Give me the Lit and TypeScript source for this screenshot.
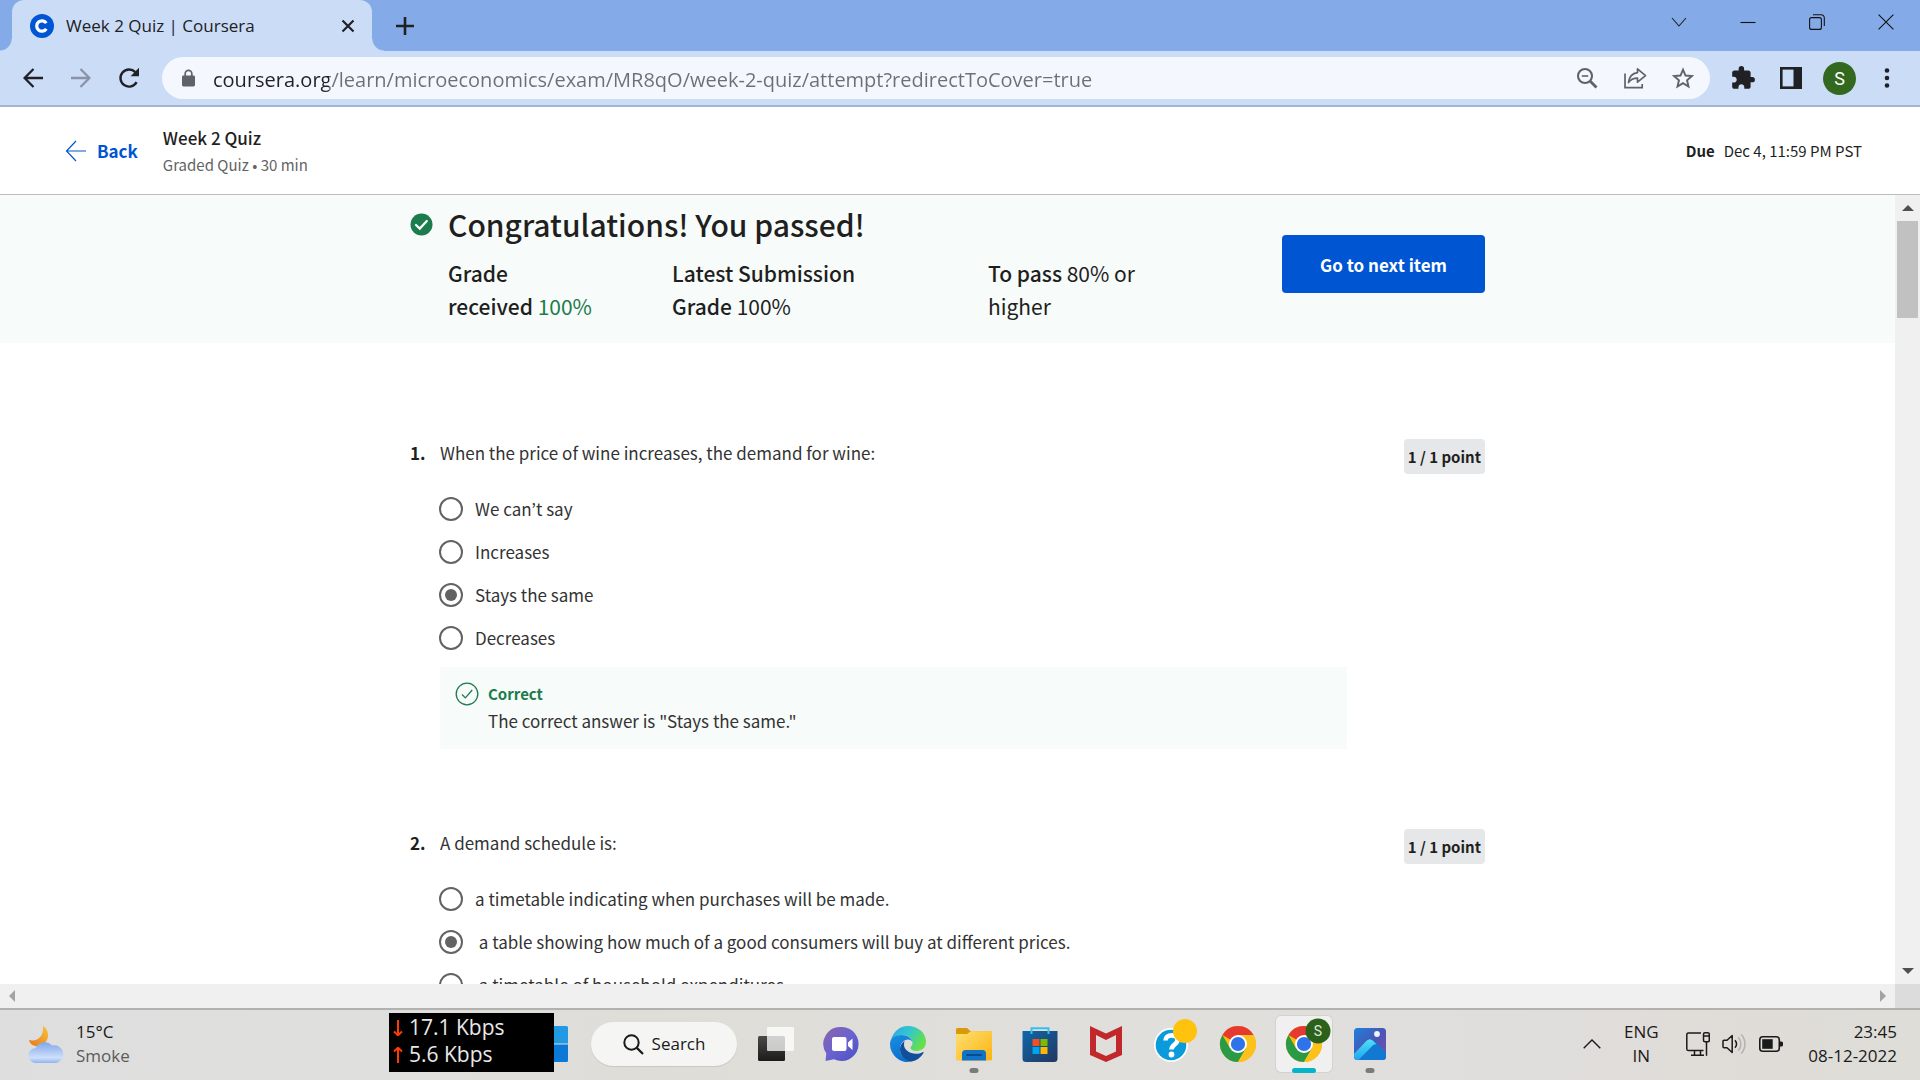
import { LitElement, html, svg, css } from "lit";
import { customElement, property, state } from "lit/decorators.js";
import { classMap } from "lit/directives/class-map.js";

const base = css`
  *, *::before, *::after { box-sizing: border-box; }
  button { font: inherit; color: inherit; border: 0; padding: 0; margin: 0; background: none; cursor: pointer; display: flex; align-items: center; justify-content: center; }
  svg { display: block; flex: none; }
  h1, h2, p { margin: 0; font-weight: inherit; font-size: inherit; }
`;

interface Question {
  number: number;
  prompt: string;
  options: string[];
  selected: number;
  explanation: string;
}

const QUESTIONS: Question[] = [
  {
    number: 1,
    prompt: "When the price of wine increases, the demand for wine:",
    options: ["We can’t say", "Increases", "Stays the same", "Decreases"],
    selected: 2,
    explanation: 'The correct answer is "Stays the same."',
  },
  {
    number: 2,
    prompt: "A demand schedule is:",
    options: [
      "a timetable indicating when purchases will be made.",
      "\u00a0a table showing how much of a good consumers will buy at different prices.",
      "\u00a0a timetable of household expenditures.",
    ],
    selected: 1,
    explanation: "",
  },
];

@customElement("browser-bar")
export class BrowserBar extends LitElement {
  static styles = [base, css`
    :host { display: block; flex: none; font-family: "Open Sans", "Noto Sans", sans-serif; color: #202124; }
    .strip { display: flex; height: 51px; background: #84abe8; }
    .tab { display: flex; align-items: center; width: 360px; margin-left: 12px; padding: 0 15px 0 18px; gap: 12px; background: #cbdcf7; border-radius: 12px 12px 0 0; position: relative; }
    .tab::before, .tab::after { content: ""; position: absolute; bottom: 0; width: 12px; height: 12px; }
    .tab::before { left: -12px; background: radial-gradient(circle at 0 0, transparent 11px, #cbdcf7 12px); }
    .tab::after { right: -12px; background: radial-gradient(circle at 100% 0, transparent 11px, #cbdcf7 12px); }
    .title { flex: 1; font-size: 17px; line-height: 24px; white-space: nowrap; }
    .new { width: 42px; margin-left: 12px; }
    .window { display: flex; margin-left: auto; padding-bottom: 8px; }
    .window button { width: 69px; }
    .bar { display: flex; align-items: center; height: 54px; padding: 0 16px 0 9px; background: #cbdcf7; }
    .nav { width: 48px; height: 42px; }
    .omnibox { flex: 1; display: flex; align-items: center; height: 42px; margin: 0 9px; padding: 0 3px 0 19px; border-radius: 21px; background: #f4f8fe; }
    .url { flex: 1; min-width: 0; border: 0; outline: 0; padding: 2px 0 0; margin-left: 17px; height: 32px; font: 20px/30px "Open Sans", "Noto Sans", sans-serif; color: transparent; background: linear-gradient(90deg, #202124 116px, #6b7077 116px); -webkit-background-clip: text; background-clip: text; }
    .tool { width: 48px; height: 42px; }
    .avatar { width: 33px; height: 33px; border-radius: 50%; background: #32691e; color: #fff; font: 18px/33px Roboto, sans-serif; margin: 0 8px; }
    .menu { width: 32px; height: 42px; margin: 0 1px 0 7px; }
    .edge { height: 2px; background: #a3b4d0; }
  `];

  render() {
    return html`
      <div class="strip">
        <div class="tab">
          <svg width="24" height="24" viewBox="0 0 24 24"><circle cx="12" cy="12" r="12" fill="#0056d2"/><path d="M16.3 9.2A5.2 5.2 0 1 0 16.3 14.8" fill="none" stroke="#fff" stroke-width="3.2"/></svg>
          <span class="title">Week 2 Quiz | Coursera</span>
          <button aria-label="Close tab"><svg width="18" height="18" viewBox="0 0 18 18"><path d="M3.500 3.500l11 11M14.500 3.500l-11 11" stroke="#202124" stroke-width="2.2"/></svg></button>
        </div>
        <button class="new" aria-label="New tab"><svg width="18" height="18" viewBox="0 0 18 18"><path d="M9 0v18M0 9h18" stroke="#202124" stroke-width="2.6"/></svg></button>
        <div class="window">
          <button aria-label="Search tabs"><svg width="16" height="16" viewBox="0 0 16 16"><path d="M1 4l7 8 7-8" fill="none" stroke="#202124" stroke-width="1.1"/></svg></button>
          <button aria-label="Minimize"><svg width="16" height="16" viewBox="0 0 16 16"><path d="M.5 8.5h15" stroke="#111" stroke-width="1.1"/></svg></button>
          <button aria-label="Restore"><svg width="16" height="16" viewBox="0 0 16 16" fill="none" stroke="#111" stroke-width="1.1"><rect x=".6" y="3.6" width="11.8" height="11.8" rx="2"/><path d="M4 .7h8.2a3.1 3.1 0 0 1 3.1 3.1V12"/></svg></button>
          <button aria-label="Close window"><svg width="16" height="16" viewBox="0 0 16 16"><path d="M.6.6l14.8 14.8M15.4.6L.6 15.4" stroke="#111" stroke-width="1.1"/></svg></button>
        </div>
      </div>
      <div class="bar">
        <button class="nav" aria-label="Back"><svg width="20" height="20" viewBox="0 0 20 20"><path d="M10.5 1L1.6 10l8.9 9M1.6 10H20" fill="none" stroke="#202124" stroke-width="2.3"/></svg></button>
        <button class="nav" aria-label="Forward"><svg width="20" height="20" viewBox="0 0 20 20"><path d="M9.5 1l8.9 9-8.9 9M18.4 10H0" fill="none" stroke="#8a93a5" stroke-width="2.3"/></svg></button>
        <button class="nav" aria-label="Reload"><svg width="22" height="22" viewBox="0 0 22 22"><path d="M18.6 15.2A8.6 8.6 0 1 1 17.3 5.1" fill="none" stroke="#202124" stroke-width="2.4"/><path d="M21 .8v8.4h-8.4z" fill="#202124"/></svg></button>
        <div class="omnibox">
          <svg width="15" height="18" viewBox="0 0 15 18"><rect x="1" y="6.5" width="13" height="11" rx="1.4" fill="#5f6368"/><path d="M4.2 7V4.6a3.3 3.3 0 0 1 6.6 0V7" fill="none" stroke="#5f6368" stroke-width="1.7"/></svg>
          <input class="url" type="text" aria-label="Address" .value=${"coursera.org/learn/microeconomics/exam/MR8qO/week-2-quiz/attempt?redirectToCover=true"} />
          <button class="tool" aria-label="Zoom"><svg width="22" height="22" viewBox="0 0 22 22" fill="none" stroke="#5f6368"><circle cx="9" cy="9" r="7" stroke-width="2.1"/><path d="M14 14l6.5 6.5" stroke-width="2.8"/><path d="M5.8 9h6.4" stroke-width="1.6"/></svg></button>
          <button class="tool" aria-label="Share"><svg width="24" height="22" viewBox="0 0 24 22" fill="none" stroke="#5f6368" stroke-width="1.7"><path d="M2 6.5v14.2h17.2V17"/><path d="M14.5 1.8L22.5 8.6l-8 6.6v-4c-4.2 0-7 1.4-9 4.4.6-5.2 3.4-9.2 9-9.9z" stroke-linejoin="round"/></svg></button>
          <button class="tool" aria-label="Bookmark"><svg width="22" height="22" viewBox="0 0 22 22"><path d="M11 2.6l2.5 5.9 6.4.55-4.85 4.2 1.45 6.25L11 16.2 5.5 19.500l1.45-6.25L2.1 9.05l6.4-.55z" fill="none" stroke="#5f6368" stroke-width="1.9"/></svg></button>
        </div>
        <button class="tool" aria-label="Extensions"><svg width="26" height="26" viewBox="0 0 24 24"><path fill="#202124" d="M20.500 11H19V7c0-1.100-.9-2-2-2h-4V3.500a2.500 2.500 0 0 0-5 0V5H4c-1.100 0-1.990.9-1.990 2v3.800H3.500c1.490 0 2.700 1.210 2.700 2.700s-1.210 2.700-2.700 2.700H2V20c0 1.100.9 2 2 2h3.800v-1.500c0-1.490 1.210-2.700 2.700-2.700s2.700 1.210 2.700 2.700V22H17c1.100 0 2-.9 2-2v-4h1.500a2.500 2.500 0 0 0 0-5z"/></svg></button>
        <button class="tool" aria-label="Side panel"><svg width="22" height="22" viewBox="0 0 22 22"><rect x="1.3" y="1.3" width="19.4" height="19.4" fill="none" stroke="#202124" stroke-width="2.6"/><path d="M13.5 1H21v20h-7.5z" fill="#202124"/></svg></button>
        <button class="avatar" aria-label="Profile">S</button>
        <button class="menu" aria-label="Menu"><svg width="6" height="22" viewBox="0 0 6 22" fill="#202124"><circle cx="3" cy="3.5" r="2.3"/><circle cx="3" cy="11" r="2.3"/><circle cx="3" cy="18.5" r="2.3"/></svg></button>
      </div>
      <div class="edge"></div>
    `;
  }
}

@customElement("quiz-header")
export class QuizHeader extends LitElement {
  static styles = [base, css`
    :host { display: flex; align-items: center; flex: none; height: 88px; padding: 0 58px 0 65px; background: #fff; border-bottom: 1px solid #bdbdbd; color: #1f1f1f; font-family: "Noto Sans CJK KR", sans-serif; }
    .back { display: flex; align-items: center; gap: 10px; color: #0056d2; font-size: 17px; line-height: 24px; font-weight: 700; text-decoration: none; }
    .names { margin-left: 25px; }
    .name { font-size: 17px; line-height: 27px; font-weight: 500; }
    .kind { font-size: 15px; line-height: 27px; color: #636363; }
    .due { display: flex; gap: 9px; margin-left: auto; font-size: 15px; line-height: 24px; }
    .due strong { font-weight: 700; }
  `];

  render() {
    return html`
      <a class="back" href="#"><svg width="22" height="22" viewBox="0 0 22 22"><path d="M11 1L1.5 11 11 21M1.5 11H21" fill="none" stroke="#0056d2" stroke-width="1.2"/></svg>Back</a>
      <div class="names">
        <h1 class="name">Week 2 Quiz</h1>
        <p class="kind">Graded Quiz • 30 min</p>
      </div>
      <div class="due"><strong>Due</strong><span>Dec 4, 11:59 PM PST</span></div>
    `;
  }
}

@customElement("grade-banner")
export class GradeBanner extends LitElement {
  static styles = [base, css`
    :host { display: block; background: #f7fbf9; color: #1f1f1f; font-family: "Noto Sans CJK KR", sans-serif; }
    .inner { display: flex; align-items: flex-start; justify-content: space-between; max-width: 1075px; margin: 0 auto; padding: 7px 0 20px; }
    .head { display: flex; align-items: center; gap: 15px; }
    .title { font-size: 30px; line-height: 44px; font-weight: 500; }
    .grades { display: grid; grid-template-columns: 148px 240px 160px; column-gap: 76px; margin: 11px 0 0 38px; font-size: 21px; line-height: 33px; }
    .grades b { font-weight: 500; }
    .pass { color: #1d7c4d; }
    .next { min-width: 203px; height: 58px; margin-top: 33px; border-radius: 4px; background: #0056d2; color: #fff; font-size: 17px; font-weight: 700; }
  `];

  render() {
    return html`
      <div class="inner">
        <div>
          <div class="head">
            <svg width="23" height="23" viewBox="0 0 23 23"><circle cx="11.5" cy="11.5" r="11" fill="#1d7c4d"/><path d="M6 12l3.8 3.6L16.8 8" fill="none" stroke="#fff" stroke-width="2.2" stroke-linecap="round"/></svg>
            <h2 class="title">Congratulations! You passed!</h2>
          </div>
          <div class="grades">
            <p><b>Grade received</b> <span class="pass">100%</span></p>
            <p><b>Latest Submission Grade</b> 100%</p>
            <p><b>To pass</b> 80% or higher</p>
          </div>
        </div>
        <button class="next">Go to next item</button>
      </div>
    `;
  }
}

@customElement("quiz-question")
export class QuizQuestion extends LitElement {
  @property({ attribute: false }) question!: Question;
  @state() private picked = -1;

  static styles = [base, css`
    :host { display: block; color: #333; font-family: "Noto Sans CJK KR", sans-serif; font-size: 17px; line-height: 27px; }
    .top { display: flex; align-items: flex-start; }
    .number { width: 30px; font-weight: 700; color: #1f1f1f; }
    .prompt { flex: 1; }
    .points { padding: 0 4px; border-radius: 4px; background: #e5e7e8; color: #1f1f1f; font-size: 15px; line-height: 35px; font-weight: 700; }
    .options { margin: 13px 0 0 29px; }
    .option { display: flex; align-items: center; gap: 12px; height: 43px; cursor: pointer; }
    .radio { appearance: none; display: grid; place-items: center; width: 24px; height: 24px; margin: 0; border: 2px solid #636363; border-radius: 50%; }
    .radio:checked::before { content: ""; width: 12px; height: 12px; border-radius: 50%; background: #636363; }
    .feedback { display: flex; gap: 9px; margin: 8px 138px 0 30px; padding: 13px 15px; background: #f7fbf9; }
    .feedback-text { padding-bottom: 2px; }
    .verdict { font-size: 15px; color: #1d7c4d; font-weight: 700; }
    .mark { margin-top: 2px; }
  `];

  willUpdate() {
    if (this.picked < 0) this.picked = this.question.selected;
  }

  render() {
    const q = this.question;
    return html`
      <div class="top">
        <span class="number">${q.number}.</span>
        <p class="prompt" id="prompt">${q.prompt}</p>
        <span class="points">1 / 1 point</span>
      </div>
      <div class="options" role="radiogroup" aria-labelledby="prompt">
        ${q.options.map((text, i) => html`
          <label class="option">
            <input class="radio" type="radio" name="answer" .checked=${this.picked === i} @change=${() => (this.picked = i)} />
            <span>${text}</span>
          </label>`)}
      </div>
      ${q.explanation ? html`
        <div class="feedback">
          <svg class="mark" width="24" height="24" viewBox="0 0 24 24" fill="none" stroke="#1d7c4d" stroke-width="1.3"><circle cx="12" cy="12" r="10.8"/><path d="M7 12.5l3.4 3.4L17.2 8"/></svg>
          <div class="feedback-text"><p class="verdict">Correct</p><p>${q.explanation}</p></div>
        </div>` : ""}
    `;
  }
}

const chrome = svg`
  <circle cx="18" cy="18" r="18" fill="#fbbc04"/>
  <path d="M18 18L2.410 9A18 18 0 0 1 33.590 9H18z" fill="#e63a30"/>
  <path d="M2.410 9A18 18 0 0 0 18 36L25.800 22.500 18 18 10.200 22.500z" fill="#2b9a47"/>
  <path d="M18 36A18 18 0 0 0 33.590 9H18L25.800 22.500z" fill="#fcc21b"/>
  <circle cx="18" cy="18" r="9" fill="#fff"/><circle cx="18" cy="18" r="7.1" fill="#2f73ea"/>`;

const ICONS = {
  taskview: svg`<defs><linearGradient id="tv" x1="0" y1="0" x2="0" y2="1"><stop stop-color="#4a4a48"/><stop offset="1" stop-color="#1b1b1b"/></linearGradient></defs><rect x="0" y="10" width="27" height="25" rx="1.5" fill="url(#tv)"/><rect x="9" y="1" width="27" height="24" rx="1" fill="#fff" fill-opacity=".75"/>`,
  chat: svg`<defs><linearGradient id="ch" x1="0" y1="0" x2="1" y2="1"><stop stop-color="#8b63a8"/><stop offset=".5" stop-color="#6a63d0"/><stop offset="1" stop-color="#4a4fc4"/></linearGradient></defs><path d="M18 1a17 17 0 1 1-8 32.200L1.500 35l.8-7.500A17 17 0 0 1 18 1z" fill="url(#ch)"/><rect x="8" y="11" width="14.5" height="14" rx="2" fill="#fff"/><path d="M24 16.500l4.500-4v11.500L24 20z" fill="#fff"/>`,
  edge: svg`<defs><linearGradient id="e1" x1="0" y1="0" x2="1" y2=".5"><stop stop-color="#2aa7e6"/><stop offset=".5" stop-color="#32c6cf"/><stop offset="1" stop-color="#66e04a"/></linearGradient><linearGradient id="e2" x1="0" y1="0" x2=".4" y2="1"><stop stop-color="#1a8fe0"/><stop offset="1" stop-color="#0a6fcf"/></linearGradient></defs>
    <path d="M1 14C3 6 9.500 0 18 0c10 0 18 7 18 15.500 0 6-4 9.500-9.500 9.500-4 0-6-1.500-6-3 0-1.500 2-2 2-5C22.500 12 18 9 12 9 7 9 3 11 1 14z" fill="url(#e1)"/>
    <path d="M0 18C0 12 5 9 11 9c6.500 0 11.500 3.500 11.500 8 0-2-2-3.500-4.500-3.500-4 0-8 4-8 9.500 0 7 5 11.500 10 12.900A18 18 0 0 1 0 18z" fill="url(#e2)"/>
    <path d="M14.500 15c-3 2-4.500 5-4.500 8 0 7 5 12 10.500 12.800A18 18 0 0 0 33.500 27c.4-.9-.3-1.200-1-.8-2 1-4 1.500-6.500 1.500-6.500 0-12-4-12-9.200 0-1.300.2-2.500.5-3.500z" fill="#104f9c"/>`,
  folder: svg`<defs><linearGradient id="fo" x1="0" y1="0" x2="1" y2="1"><stop stop-color="#ffdf72"/><stop offset="1" stop-color="#fbb40e"/></linearGradient></defs><path d="M0 3.500A1.500 1.500 0 0 1 1.500 2H11l4 3.500h19.500A1.500 1.500 0 0 1 36 7v8H0z" fill="#d99a0a"/><path d="M0 8h11l4-2.700h21V33a1.500 1.500 0 0 1-1.500 1.500h-33A1.500 1.500 0 0 1 0 33z" fill="url(#fo)"/><path d="M6 34.500V27.500a3.500 3.500 0 0 1 3.500-3.500h17a3.500 3.500 0 0 1 3.500 3.500v7z" fill="#1173c6"/><path d="M11 29h14" stroke="#0a4b8b" stroke-width="2" stroke-linecap="round"/>`,
  store: svg`<defs><linearGradient id="st" x1="0" y1="0" x2="1" y2="1"><stop stop-color="#0d68ab"/><stop offset="1" stop-color="#243660"/></linearGradient></defs><path d="M9.500 7V2.200h17V7" fill="none" stroke="#35c0ee" stroke-width="2"/><path d="M.500 5h35v27.500A3.500 3.500 0 0 1 32 36H4a3.500 3.500 0 0 1-3.500-3.500z" fill="url(#st)"/><path d="M9.500 5v3M26.500 5v3" stroke="#35c0ee" stroke-width="2"/><path d="M10.500 13h7v7h-7z" fill="#f25022"/><path d="M18.500 13h7v7h-7z" fill="#7fba00"/><path d="M10.500 21h7v7h-7z" fill="#00a4ef"/><path d="M18.500 21h7v7h-7z" fill="#ffb900"/>`,
  shield: svg`<path d="M2 0l16 7.500L34 0v29L18 36 2 29z" fill="#c0282c"/><path d="M8 9l10 5 10-5v16.500L18 30 8 25.500z" fill="#e0deda"/>`,
  help: svg`<circle cx="17" cy="19" r="17" fill="#fff"/><circle cx="17" cy="19" r="15.3" fill="#0a9bdc"/><path d="M11.500 14.500c0-7 12-6.500 12-.5 0 4.500-6 4.500-6 9.500" fill="none" stroke="#fff" stroke-width="4.6"/><circle cx="17.5" cy="28.5" r="2.9" fill="#fff"/><circle cx="31" cy="5" r="12" fill="#ffc20e"/>`,
  chrome,
  profile: svg`${chrome}<circle cx="32" cy="5" r="12.5" fill="#2c611b"/><text x="32" y="10" text-anchor="middle" font-family="Roboto, sans-serif" font-size="14" fill="#dfe8da">S</text>`,
  photos: svg`<defs><linearGradient id="ph" x1="0" y1="0" x2="1" y2="1"><stop stop-color="#1b83dc"/><stop offset=".5" stop-color="#4a55b5"/><stop offset="1" stop-color="#7a4db0"/></linearGradient><linearGradient id="pm" x1="0" y1="0" x2="0" y2="1"><stop stop-color="#4fe0f7"/><stop offset="1" stop-color="#1da5ee"/></linearGradient></defs><rect x="2" y="2" width="32" height="32" rx="3.5" fill="url(#ph)"/><path d="M6 34L20.500 13.500 34 26.500V30.500a3.500 3.500 0 0 1-3.500 3.500z" fill="#1279d3"/><path d="M2 28L14.500 14.800c2-2 4.500-2 6.500 0l3.500 3.400c-1.500-.2-2.800.3-4 1.500L6.500 34h-1A3.500 3.500 0 0 1 2 30.500z" fill="url(#pm)"/><circle cx="25" cy="8" r="2.9" fill="#eef3ff"/>`,
};

interface Tile { label: string; icon: keyof typeof ICONS; running?: boolean; active?: boolean; }

const TILES: Tile[] = [
  { label: "Task view", icon: "taskview" },
  { label: "Chat", icon: "chat" },
  { label: "Edge", icon: "edge" },
  { label: "File Explorer", icon: "folder", running: true },
  { label: "Store", icon: "store" },
  { label: "McAfee", icon: "shield" },
  { label: "Help", icon: "help" },
  { label: "Chrome", icon: "chrome" },
  { label: "Chrome, profile S", icon: "profile", active: true },
  { label: "Photos", icon: "photos", running: true },
];

@customElement("task-bar")
export class TaskBar extends LitElement {
  static styles = [base, css`
    :host { display: grid; grid-template-columns: 1fr auto 1fr; align-items: center; flex: none; height: 72px; border-top: 2px solid #b1b1b0; padding: 0 23px 2px; position: relative; background: linear-gradient(90deg, #dedede, #dfdfde 18%, #dfddd8 33%, #e1dfdb 62%, #dfdedd 78%, #e0dcd8 88%, #deddd8); color: #1a1a1a; font-family: "Open Sans", "Noto Sans", sans-serif; font-size: 17px; line-height: 24px; box-sizing: border-box; }
    .weather { display: flex; align-items: center; gap: 11px; justify-self: start; text-align: left; margin-left: 5px; }
    .sky { color: #5b5b5b; }
    .meter { position: absolute; left: 389px; top: 3px; width: 165px; height: 59px; background: #000; color: #e8e8e8; font-size: 21px; line-height: 27px; padding: 1px 4px; }
    .meter p { display: flex; align-items: center; gap: 6px; }
    .apps { display: flex; align-items: center; height: 68px; }
    .tile { position: relative; width: 56px; height: 56px; margin-right: 10px; border-radius: 5px; }
    .tile:last-child { margin-right: 0; }
    .tile svg { overflow: visible; }
    .active { background: #f0f0f0; box-shadow: 0 0 0 1px #d3d2cf; }
    .running::after, .active::after { content: ""; position: absolute; bottom: -1px; left: 50%; height: 5px; border-radius: 3px; translate: -50% 0; }
    .running::after { width: 9px; background: #7b7b7a; }
    .active::after { width: 24px; background: #06b4c9; }
    .search { display: flex; align-items: center; gap: 8px; width: 146px; height: 44px; margin: 0 11px 0 3px; border-radius: 22px; background: #f5f5f3; box-shadow: 0 1px 1px #c8c7c3; }
    .tray { display: flex; align-items: center; justify-self: end; gap: 12px; }
    .lang { display: block; width: 36px; text-align: center; margin: 0 15px 0 10px; }
    .clock { text-align: right; margin-left: 13px; white-space: nowrap; }
  `];

  render() {
    return html`
      <button class="weather">
        <svg width="37" height="37" viewBox="0 0 37 37">
          <defs><linearGradient id="mo" x1="1" y1="0" x2="0" y2="1"><stop stop-color="#f6c43c"/><stop offset="1" stop-color="#e8791c"/></linearGradient><linearGradient id="cl" x1="0" y1="0" x2="0" y2="1"><stop stop-color="#7fa6ea"/><stop offset=".75" stop-color="#cfe0fa"/><stop offset="1" stop-color="#8fb2f0"/></linearGradient></defs>
          <path d="M15 0C23 5 22 19 9 20 5 20 2 18 1 14c8 2 15-3 14-14z" fill="url(#mo)"/>
          <path d="M8.500 37a7.500 7.500 0 0 1-1-15A10 10 0 0 1 24 19.500 8.700 8.700 0 1 1 28.500 37z" fill="url(#cl)"/>
        </svg>
        <span><div>15°C</div><div class="sky">Smoke</div></span>
      </button>
      <div class="apps">
        <button class="tile" aria-label="Start"><svg width="36" height="36" viewBox="0 0 36 36"><path d="M0 0h17.500v17.500H0zM18.500 0h16A1.500 1.500 0 0 1 36 1.500v16H18.500z" fill="#2199e4"/><path d="M0 18.500h17.500V36H0zM18.500 18.500H36v16a1.500 1.500 0 0 1-1.500 1.500h-16z" fill="#0a7ad6"/></svg></button>
        <button class="search"><svg width="21" height="21" viewBox="0 0 21 21"><circle cx="8.5" cy="8.5" r="7.2" fill="none" stroke="#1a1a1a" stroke-width="2"/><path d="M13.600 13.600l6.400 6.400" stroke="#1a1a1a" stroke-width="2.2"/></svg>Search</button>
        ${TILES.map((t) => html`
          <button class=${classMap({ tile: true, running: !!t.running, active: !!t.active })} aria-label=${t.label}>
            <svg width="36" height="36" viewBox="0 0 36 36">${ICONS[t.icon]}</svg>
          </button>`)}
      </div>
      <div class="tray">
        <button aria-label="Hidden icons"><svg width="18" height="10" viewBox="0 0 18 10"><path d="M.7 9.300L9 1l8.300 8.300" fill="none" stroke="#1a1a1a" stroke-width="1.4"/></svg></button>
        <button class="lang"><div>ENG</div><div>IN</div></button>
        <button aria-label="Network"><svg width="24" height="24" viewBox="0 0 24 24" fill="none" stroke="#1a1a1a" stroke-width="1.5"><path d="M15 .9H2.500A1.700 1.700 0 0 0 .8 2.600v14.300a1.700 1.700 0 0 0 1.700 1.700H17.500M5 23.200h13M8.500 19v4M14.500 19v4"/><rect x="17.5" y=".8" width="5.8" height="9" rx="1.5"/><path d="M17.500 4h6M20.500 10v13.700"/></svg></button>
        <button aria-label="Volume"><svg width="25" height="20" viewBox="0 0 25 20" fill="none" stroke="#1a1a1a" stroke-width="1.5"><path d="M1 7.200A1 1 0 0 1 2 6.200h3L10.200 1.500v17L5 13.800H2a1 1 0 0 1-1-1z" stroke-linejoin="round"/><path d="M13 6.200a6 6 0 0 1 0 7.600"/><g stroke="#b3b2af"><path d="M16.200 3.200a10 10 0 0 1 0 13.600"/><path d="M19.300.6a14 14 0 0 1 0 18.800"/></g></svg></button>
        <button aria-label="Battery"><svg width="24" height="16" viewBox="0 0 24 16"><rect x=".8" y=".8" width="19.5" height="14.4" rx="3" fill="none" stroke="#1a1a1a" stroke-width="1.6"/><rect x="3.2" y="3.2" width="10.5" height="9.6" fill="#1a1a1a"/><path d="M21 5.500h1.500A1.500 1.500 0 0 1 24 7v2a1.500 1.500 0 0 1-1.500 1.500H21z" fill="#1a1a1a"/></svg></button>
        <button class="clock"><span><div>23:45</div><div>08-12-2022</div></span></button>
      </div>
      <div class="meter">
        <p><svg width="10" height="16" viewBox="0 0 10 16"><path d="M5 0v15M1 11.500l4 3.800 4-3.800" fill="none" stroke="#ff3c00" stroke-width="2"/></svg>17.1 Kbps</p>
        <p><svg width="10" height="16" viewBox="0 0 10 16"><path d="M5 16V1M1 4.500L5 .7l4 3.800" fill="none" stroke="#ff3c00" stroke-width="2"/></svg>5.6 Kbps</p>
      </div>
    `;
  }
}

@customElement("app-root")
export class AppRoot extends LitElement {
  static styles = [base, css`
    :host { display: flex; flex-direction: column; height: 100vh; overflow: hidden; background: #fff; }
    .view { flex: 1; min-height: 0; display: grid; grid-template-columns: minmax(0, 1fr) 25px; grid-template-rows: minmax(0, 1fr) 24px; }
    .page { overflow: hidden; }
    .questions { display: flex; flex-direction: column; gap: 80px; max-width: 1075px; margin: 0 auto; padding-top: 96px; }
    .vbar { display: flex; flex-direction: column; align-items: center; background: #f0f0f0; }
    .vbar button { width: 25px; height: 26px; }
    .thumb { width: 21px; height: 97px; background: #c1c1c1; }
    .end { margin-top: auto; }
    .hbar { display: flex; justify-content: space-between; background: #f0f0f0; }
    .hbar button { width: 24px; }
    .corner { background: #dcdcdc; }
  `];

  render() {
    return html`
      <browser-bar></browser-bar>
      <quiz-header></quiz-header>
      <div class="view">
        <main class="page">
          <grade-banner></grade-banner>
          <div class="questions">
            ${QUESTIONS.map((q) => html`<quiz-question .question=${q}></quiz-question>`)}
          </div>
        </main>
        <div class="vbar">
          <button aria-label="Scroll up"><svg width="12" height="6" viewBox="0 0 12 6"><path d="M6 0l6 6H0z" fill="#505050"/></svg></button>
          <div class="thumb"></div>
          <button class="end" aria-label="Scroll down"><svg width="12" height="6" viewBox="0 0 12 6"><path d="M0 0h12L6 6z" fill="#505050"/></svg></button>
        </div>
        <div class="hbar">
          <button aria-label="Scroll left"><svg width="6" height="12" viewBox="0 0 6 12"><path d="M6 0v12L0 6z" fill="#a3a3a3"/></svg></button>
          <button aria-label="Scroll right"><svg width="6" height="12" viewBox="0 0 6 12"><path d="M0 0l6 6-6 6z" fill="#a3a3a3"/></svg></button>
        </div>
        <div class="corner"></div>
      </div>
      <task-bar></task-bar>
    `;
  }
}
